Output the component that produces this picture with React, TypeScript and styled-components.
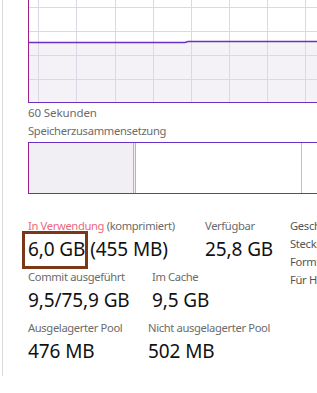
import React from "react"
import styled, { createGlobalStyle } from "styled-components"

const GlobalStyle = createGlobalStyle`
  html, body {
    margin: 0;
    padding: 0;
    background: #ffffff;
    overflow: hidden;
  }
  body {
    font-family: "Noto Sans", "Open Sans", sans-serif;
  }
`

const Page = styled.div`
  width: 317px;
  height: 393px;
  overflow: hidden;
  position: relative;
`

const Panel = styled.div`
  margin-left: 2px;
  height: 376px;
  border-left: 1px solid #d9d9d9;
  padding-left: 25px;
  box-sizing: border-box;
`

const Chart = styled.svg`
  display: block;
  width: 300px;
  height: 103px;
`

const Caption = styled.div`
  font-size: 11.2px;
  line-height: 15px;
  color: #6b6b6b;
  white-space: nowrap;
  letter-spacing: -0.3px;
`

const ChartCaption = styled(Caption)`
  margin-top: 2px;
  height: 18px;
  font-size: 11.5px;
  letter-spacing: -0.1px;
`

const CompBar = styled.div`
  margin-top: 4px;
  width: 300px;
  height: 52px;
  border: 1px solid #6a32c4;
  border-left-color: #a0208a;
  box-sizing: border-box;
  display: flex;
`

const Segment = styled.div<{ $w: number; $fill: string; $sep?: boolean }>`
  width: ${(p) => p.$w}px;
  flex: none;
  background: ${(p) => p.$fill};
  border-right: ${(p) => (p.$sep ? "3px double #b8b0c4" : "1px solid #c2bccb")};
`

const Stats = styled.div`
  margin-top: 22px;
  display: flex;
  flex-direction: column;
  gap: 5px;
`

const Row = styled.div`
  display: flex;
  position: relative;
`

const Cell = styled.div<{ $w: number }>`
  width: ${(p) => p.$w}px;
  flex: none;
  display: flex;
  flex-direction: column;
`

const Label = styled(Caption)`
  line-height: 20px;
  letter-spacing: -0.35px;
`

const Red = styled.span`
  color: #ea6a7e;
`

const Value = styled.div`
  font-size: 19px;
  line-height: 26px;
  color: #111111;
  white-space: nowrap;
  letter-spacing: -0.1px;
`

const Boxed = styled.span`
  position: relative;
  &::before {
    content: "";
    position: absolute;
    left: -6px;
    right: -3px;
    top: -5px;
    bottom: -7px;
    border: 3px solid #7a3816;
  }
`

const SideList = styled.div`
  position: absolute;
  left: 262px;
  top: 1px;
  display: flex;
  flex-direction: column;
`

const SideItem = styled(Caption)`
  line-height: 18px;
  color: #555555;
`

function MemoryChart() {
  const xs = [10, 48, 87, 125, 163, 201, 239, 277]
  const ys = [7, 31, 55, 79]
  return (
    <Chart viewBox="0 0 300 103">
      <path d="M1 42 H157 L160 41 H300 V102 H1 Z" fill="#f4f1f7" />
      {xs.map((x) => (
        <line key={"v" + x} x1={x + 0.5} y1={0} x2={x + 0.5} y2={102} stroke="#ddd6e3" strokeWidth={1} />
      ))}
      {ys.map((y) => (
        <line key={"h" + y} x1={1} y1={y + 0.5} x2={300} y2={y + 0.5} stroke="#ddd6e3" strokeWidth={1} />
      ))}
      <path d="M1 42.5 H157 L160 41.5 H300" fill="none" stroke="#6a32c4" strokeWidth={1.4} />
      <line x1={0.5} y1={0} x2={0.5} y2={103} stroke="#a0208a" strokeWidth={1} />
      <line x1={0} y1={102.5} x2={300} y2={102.5} stroke="#6a32c4" strokeWidth={1} />
    </Chart>
  )
}

export default function App() {
  return (
    <Page>
      <GlobalStyle />
      <Panel>
        <MemoryChart />
        <ChartCaption>60 Sekunden</ChartCaption>
        <Caption>Speicherzusammensetzung</Caption>
        <CompBar>
          <Segment $w={104} $fill="#f1eff3" $sep />
          <Segment $w={165} $fill="#ffffff" />
          <Segment $w={30} $fill="#ffffff" />
        </CompBar>
        <Stats>
          <Row>
            <Cell $w={177}>
              <Label>
                <Red>In Verwendung</Red> (komprimiert)
              </Label>
              <Value>
                <Boxed>6,0 GB</Boxed> (455 MB)
              </Value>
            </Cell>
            <Cell $w={85}>
              <Label>Verfügbar</Label>
              <Value>25,8 GB</Value>
            </Cell>
            <SideList>
              <SideItem>Geschwindigkeit:</SideItem>
              <SideItem>Steckplätze:</SideItem>
              <SideItem>Formfaktor:</SideItem>
              <SideItem>Für Hardware reserviert:</SideItem>
            </SideList>
          </Row>
          <Row>
            <Cell $w={124}>
              <Label>Commit ausgeführt</Label>
              <Value>9,5/75,9 GB</Value>
            </Cell>
            <Cell $w={100}>
              <Label>Im Cache</Label>
              <Value>9,5 GB</Value>
            </Cell>
          </Row>
          <Row>
            <Cell $w={120}>
              <Label>Ausgelagerter Pool</Label>
              <Value>476 MB</Value>
            </Cell>
            <Cell $w={150}>
              <Label>Nicht ausgelagerter Pool</Label>
              <Value>502 MB</Value>
            </Cell>
          </Row>
        </Stats>
      </Panel>
    </Page>
  )
}
